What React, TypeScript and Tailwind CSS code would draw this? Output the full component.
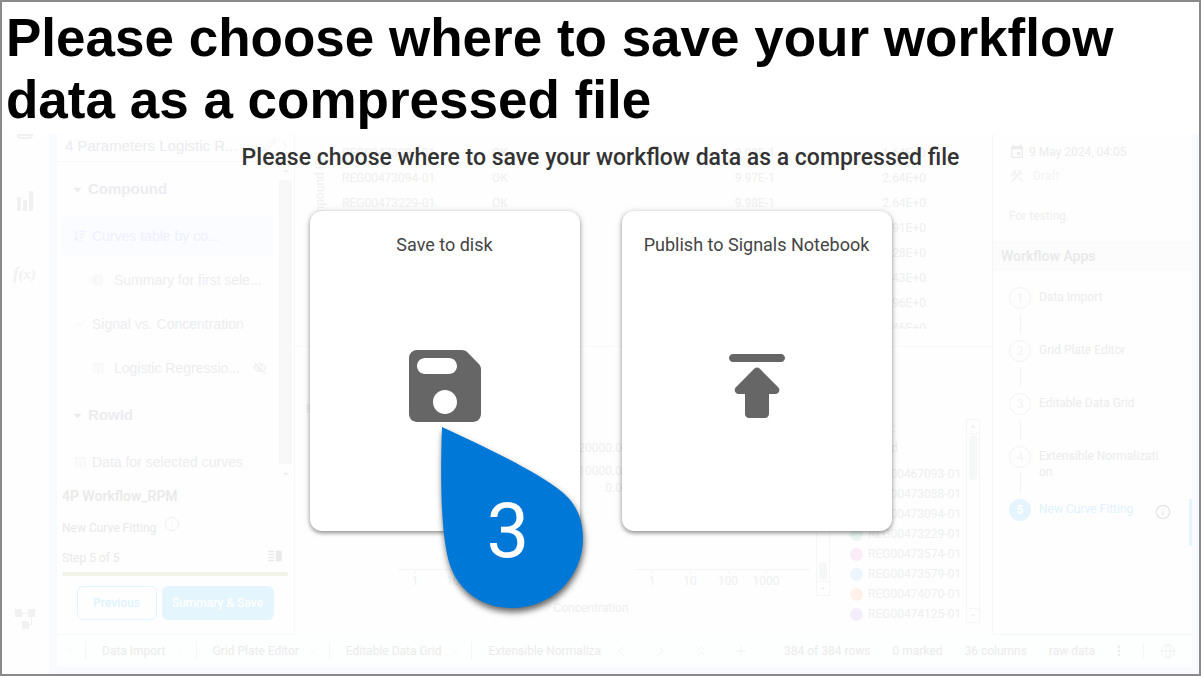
import {
  ChevronLeft,
  ChevronRight,
  ChevronsUp,
  Globe,
  Info,
  Pencil,
  Plus,
  X,
} from 'lucide-react';
import {
  MdArrowDropDown,
  MdArrowDropUp,
  MdConstruction,
  MdEvent,
  MdMoreVert,
  MdOutlineVisibilityOff,
  MdPieChart,
  MdShowChart,
  MdTableChart,
  MdVerticalSplit,
} from 'react-icons/md';
import { FaSortAmountDown } from 'react-icons/fa';
import type { ReactNode } from 'react';

const rows = [
  ['REG00473088-01', 'OK', '9.98E-1', '1.64E+0'],
  ['REG00473094-01', 'OK', '9.97E-1', '2.64E+0'],
  ['REG00473229-01', 'OK', '9.98E-1', '2.64E+0'],
  ['REG00473574-01', 'OK', '9.98E-1', '1.91E+0'],
  ['REG00473579-01', 'OK', '9.97E-1', '2.28E+0'],
  ['REG00474070-01', 'OK', '9.98E-1', '2.43E+0'],
  ['REG00474125-01', 'OK', '9.96E-1', '1.96E+0'],
  ['REG00474130-01', 'OK', '9.98E-1', '2.46E+0'],
];

const legend = [
  { id: 'REG00467093-01', color: 'bg-[#edf6fd]' },
  { id: 'REG00473088-01', color: 'bg-[#fef1e9]' },
  { id: 'REG00473094-01', color: 'bg-[#f4ecfc]' },
  { id: 'REG00473229-01', color: 'bg-[#eaf8f1]' },
  { id: 'REG00473574-01', color: 'bg-[#faedf9]' },
  { id: 'REG00473579-01', color: 'bg-[#ecf5fc]' },
  { id: 'REG00474070-01', color: 'bg-[#fef1e9]' },
  { id: 'REG00474125-01', color: 'bg-[#f4edfb]' },
];

const steps = ['Data Import', 'Grid Plate Editor', 'Editable Data Grid', 'Extensible Normalization', 'New Curve Fitting'];

const tabs = ['Data Import', 'Grid Plate Editor', 'Editable Data Grid'];

function Rail() {
  return (
    <nav className="flex w-[47px] shrink-0 flex-col items-center pr-0.5 text-[#f1f1f1]">
      <div className="h-[5px] w-4 rounded-b-sm border-2 border-current" />
      <svg viewBox="0 0 16 20" className="mt-[52px] h-5 w-4" fill="currentColor">
        <path d="M0 6h4v14H0zM6 9h4v11H6zM12 0h4v20h-4z" />
      </svg>
      <span className="mt-[51px] font-['Liberation_Serif',serif] text-[17px] leading-6 font-bold italic">
        f<span className="text-[15px]">(x)</span>
      </span>
      <svg viewBox="0 0 20 20" className="mt-auto mb-[45px] h-5 w-5" fill="currentColor">
        <path d="M0 0h7v8H0zM13 0h7v8h-7zM7 12h7v8H7zM7 4h6v1H7zM14 15h2V8h1v8h-3z" />
      </svg>
    </nav>
  );
}

interface TreeItemProps {
  icon: ReactNode;
  label: string;
  nested?: boolean;
  active?: boolean;
  hidden?: boolean;
}

function TreeItem({ icon, label, nested, active, hidden }: TreeItemProps) {
  return (
    <div
      className={`my-0.5 flex h-10 items-center rounded pr-1.5 ${nested ? 'gap-2 pl-[29px]' : 'gap-1 pl-[11px]'} ${
        active ? 'bg-[#fbfcff] text-[#eeefff]' : 'text-[#ededf0]'
      }`}
    >
      <span className={`flex w-4 shrink-0 justify-center text-sm ${active ? '' : 'text-[#f8f8f8]'}`}>{icon}</span>
      <span className="whitespace-nowrap">{label}</span>
      {hidden && <MdOutlineVisibilityOff className="ml-auto shrink-0 text-sm" />}
    </div>
  );
}

function TreeGroup({ label }: { label: string }) {
  return (
    <div className="flex h-[50px] items-center pl-1.5 text-[15px] font-bold text-[#ececf0]">
      <MdArrowDropDown className="text-[21px]" />
      <span>{label}</span>
    </div>
  );
}

function AnalysisPanel() {
  return (
    <aside className="flex w-[238px] shrink-0 flex-col border-r border-b border-[#f7f7fa] font-['Liberation_Sans',sans-serif] text-[14px]">
      <div className="flex h-7 items-start border-b border-[#f7f7f9] pl-2 text-[15px] leading-6 text-[#ebebee]">
        <span className="w-[190px] shrink-0">4 Parameters Logistic R...</span>
        <Pencil className="mt-1 ml-2 h-3.5 w-3.5 shrink-0" strokeWidth={1} />
        <ChevronRight className="mt-1 h-4 w-4 shrink-0" strokeWidth={1} />
      </div>
      <div className="flex">
        <div className="flex min-w-0 flex-1 flex-col pt-0.5 pl-1">
          <TreeGroup label="Compound" />
          <TreeItem icon={<FaSortAmountDown className="text-xs" />} label="Curves table by co..." active />
          <TreeItem icon={<MdPieChart />} label="Summary for first sele..." nested />
          <TreeItem icon={<MdShowChart />} label="Signal vs. Concentration" />
          <TreeItem icon={<MdTableChart />} label="Logistic Regressio..." nested hidden />
          <TreeGroup label="RowId" />
          <TreeItem icon={<MdTableChart />} label="Data for selected curves" />
        </div>
        <div className="mr-0.5 ml-1.5 flex w-[13px] flex-col items-center text-[#efefef]">
          <MdArrowDropUp className="h-[18px] w-4" />
          <div className="h-[284px] w-full bg-[#f8f8f8]" />
          <MdArrowDropDown className="h-5 w-4" />
        </div>
      </div>
      <div className="flex flex-1 flex-col pr-1.5 pl-[5px] font-[Roboto,sans-serif] text-[12px] text-[#e9e9e9]">
        <p className="text-[14px] leading-6 font-medium">4P Workflow_RPM</p>
        <p className="mt-2 flex items-center gap-2 leading-6">
          New Curve Fitting <Info className="mb-2 h-4 w-4" strokeWidth={1} />
        </p>
        <p className="mt-2 flex h-5 items-center justify-between pr-1">
          Step 5 of 5 <MdVerticalSplit className="mb-1 text-lg" />
        </p>
        <div className="mt-1 h-1 rounded-full bg-[#eff4e6]" />
        <div className="mt-2.5 flex justify-center gap-[5px] font-medium">
          <button className="h-[34px] w-20 rounded-md border border-[#e3f4fe] text-[#e0f2fd]">Previous</button>
          <button className="h-[34px] w-28 rounded-md bg-[#e5f5fd] text-white">Summary &amp; Save</button>
        </div>
      </div>
    </aside>
  );
}

function Axis({ x }: { x: number }) {
  return (
    <g>
      <path d={`M${x - 17} 222.5h175`} stroke="#f5f5f5" />
      {['1', '10', '100', '1000'].map((t, i) => (
        <g key={t}>
          <path d={`M${x + i * 38}.5 222v4`} stroke="#f5f5f5" />
          <text x={x + i * 38} y={238} textAnchor="middle">
            {t}
          </text>
        </g>
      ))}
    </g>
  );
}

function Charts() {
  return (
    <svg viewBox="0 0 521 288" className="h-72 w-[521px] shrink-0 text-[12px]" fill="#efefef">
      <text x="11" y="66">R</text>
      <text x="327" y="105" textAnchor="end">20000.0</text>
      <text x="327" y="128" textAnchor="end">10000.0</text>
      <text x="327" y="145" textAnchor="end">0.0</text>
      <Axis x={120} />
      <Axis x={357} />
      <text x="296" y="265" textAnchor="middle">Concentration</text>
    </svg>
  );
}

function Visuals() {
  return (
    <section className="flex min-w-0 flex-1 flex-col text-[12px] text-[#efefef]">
      <div className="flex h-[213px] shrink-0 border-b border-[#f9f9f9]">
        <div className="w-[47px] shrink-0 pt-6">
          <span className="ml-4 block rotate-180 leading-[18px] [writing-mode:vertical-rl]">Compound ID</span>
        </div>
        <div className="h-[195px] overflow-hidden pt-1.5">
          <table className="table-fixed">
            <tbody>
              {rows.map(([id, status, fit, slope], i) => (
                <tr key={i} className="h-[25px]">
                  <td className="w-[150px]">{id}</td>
                  <td className="w-[133px]">{status}</td>
                  <td className="w-[150px] text-right">{fit}</td>
                  <td className="w-[151px] text-right">{slope}</td>
                </tr>
              ))}
            </tbody>
          </table>
        </div>
      </div>
      <div className="flex">
        <Charts />
        <div className="mt-[72px] flex h-[177px] w-3.5 shrink-0 flex-col items-center justify-end border border-[#f6f6f6]">
          <div className="mb-px h-[18px] w-2 rounded-full bg-[#f6f8f7]" />
          <MdArrowDropDown className="h-3.5 w-full border-t border-[#f6f6f6]" />
        </div>
        <div className="ml-5 w-[116px] pt-[71px]">
          <p className="w-[46px] text-right leading-5">Color:</p>
          <p className="w-12 text-right leading-5">Id</p>
          <ul className="mt-1.5">
            {legend.map(({ id, color }) => (
              <li key={id} className="flex h-5 items-center gap-[5px]">
                <span className={`h-[13px] w-[13px] rounded-full ${color}`} />
                {id}
              </li>
            ))}
          </ul>
        </div>
        <div className="mt-[72px] flex h-[204px] w-3.5 shrink-0 flex-col items-center border border-[#f6f6f6]">
          <MdArrowDropUp className="h-3.5 w-full border-b border-[#f6f6f6]" />
          <div className="mt-px h-[45px] w-2 rounded-full bg-[#f6f8f7]" />
          <MdArrowDropDown className="mt-auto h-3.5 w-full border-t border-[#f6f6f6]" />
        </div>
      </div>
    </section>
  );
}

function WorkflowPanel() {
  return (
    <aside className="w-[200px] shrink-0 border-b border-l border-[#f6f6f6] text-[12px] text-[#ececec]">
      <p className="mt-1.5 ml-4 flex h-6 items-center gap-1">
        <MdEvent className="text-base" /> 9 May 2024, 04:05
      </p>
      <p className="ml-4 flex h-6 items-center gap-2 text-[#f3f3f3]">
        <MdConstruction className="text-base" /> Draft
      </p>
      <p className="mt-4 ml-4 leading-6 text-[#efefef]">For testing.</p>
      <h2 className="mt-[13px] bg-[#fcfcfc] pl-2 text-[14px] leading-[30px] font-medium text-[#e9e9e9]">Workflow Apps</h2>
      <ol className="mt-4">
        {steps.map((step, i) => {
          const current = i === steps.length - 1;
          return (
            <li key={step} className="flex h-[53px]">
              <div className="ml-4 flex flex-col items-center">
                <span
                  className={`flex h-[22px] w-[22px] items-center justify-center rounded-full border ${
                    current ? 'border-[#e5f5fd] bg-[#e5f5fd] font-bold text-white' : 'border-[#f3f3f3] text-[#f3f3f3]'
                  }`}
                >
                  {i + 1}
                </span>
                {!current && <span className="mt-[5px] h-5 w-px bg-[#f3f3f3]" />}
              </div>
              <span className={`mt-0.5 ml-2 w-[122px] leading-4 break-all ${current ? 'text-[#dff2fd]' : ''}`}>{step}</span>
              {current && (
                <>
                  <Info className="-ml-1.5 mt-[5px] h-4 w-4 text-[#e5e5e5]" strokeWidth={2} />
                  <span className="ml-auto h-[47px] w-[3px] bg-[#e5f5fd]" />
                </>
              )}
            </li>
          );
        })}
      </ol>
    </aside>
  );
}

function StatusBar() {
  return (
    <footer className="flex h-8 shrink-0 items-center bg-[#fdfefe] text-[12px] whitespace-nowrap text-[#ebebeb]">
      <X className="ml-1.5 h-3 w-3 shrink-0 text-[#f4f4f4]" strokeWidth={1} />
      {tabs.map((tab) => (
        <div key={tab} className="ml-2.5 flex items-center border-l border-[#f5f5f5]">
          <button className="pl-4">{tab}</button>
          <X className="ml-2 h-3 w-3 shrink-0 text-[#f4f4f4]" strokeWidth={1} />
        </div>
      ))}
      <button className="ml-2.5 border-l border-[#f5f5f5] pl-4">Extensible Normaliza</button>
      <div className="ml-3 flex gap-6">
        <ChevronLeft className="h-4 w-4" strokeWidth={1} />
        <ChevronRight className="h-4 w-4" strokeWidth={1} />
        <ChevronsUp className="h-4 w-4" strokeWidth={1} />
        <Plus className="h-4 w-4" strokeWidth={1} />
      </div>
      <div className="ml-auto flex items-center gap-[22px]">
        <span>384 of 384 rows</span>
        <span>0 marked</span>
        <span>36 columns</span>
        <span>raw data</span>
      </div>
      <MdMoreVert className="ml-4 text-base" />
      <span className="ml-4 h-4 w-px bg-[#f5f5f5]" />
      <Globe className="mr-4 ml-4 h-4 w-4" strokeWidth={1} />
    </footer>
  );
}

function StepMarker() {
  return (
    <div className="pointer-events-none absolute top-[206px] left-[121px]">
      <svg width="163" height="203" viewBox="0 0 163 203" className="drop-shadow-[1px_4px_3px_rgba(0,0,0,0.6)]">
        <path
          d="M11 10C61 33 103 54 126 71C143 83 152 99 152 121C152 160 121 191 81 191C53 191 30 176 20 151C10 124 9 68 11 10Z"
          fill="#0078d7"
        />
      </svg>
      <span className="absolute top-[72px] left-14 text-[76px] leading-[84px] text-white">3</span>
    </div>
  );
}

interface SaveCardProps {
  label: string;
  path: string;
  children?: ReactNode;
}

function SaveCard({ label, path, children }: SaveCardProps) {
  return (
    <div className="relative">
      <button className="flex h-80 w-[270px] flex-col items-center rounded-xl bg-white pt-[22px] shadow-[0_2px_4px_rgba(0,0,0,0.4),0_0_8px_rgba(0,0,0,0.1)]">
        <span className="text-[18px] leading-6 text-[#444]">{label}</span>
        <svg viewBox="0 0 24 24" className="mt-[81px] h-24 w-24" fill="#666">
          <path d={path} />
        </svg>
      </button>
      {children}
    </div>
  );
}

function SaveDialog() {
  return (
    <div role="dialog" aria-labelledby="save-title" className="absolute inset-0 flex flex-col items-center gap-[38px] pt-[9px]">
      <h2 id="save-title" className="text-[23px] leading-[30px] font-medium text-[#333]">
        Please choose where to save your workflow data as a compressed file
      </h2>
      <div className="flex gap-[42px]">
        <SaveCard
          label="Save to disk"
          path="M17.59 3.59c-.38-.38-.89-.59-1.42-.59H5a2 2 0 0 0-2 2v14c0 1.1.9 2 2 2h14c1.1 0 2-.9 2-2V7.83c0-.53-.21-1.04-.59-1.41l-2.82-2.83zM12 19c-1.66 0-3-1.34-3-3s1.34-3 3-3 3 1.34 3 3-1.34 3-3 3zm1-10H7c-1.1 0-2-.9-2-2s.9-2 2-2h6c1.1 0 2 .9 2 2s-.9 2-2 2z"
        >
          <StepMarker />
        </SaveCard>
        <SaveCard
          label="Publish to Signals Notebook"
          path="M5 5c0 .55.45 1 1 1h12c.55 0 1-.45 1-1s-.45-1-1-1H6c-.55 0-1 .45-1 1zm2.41 9H9v5c0 .55.45 1 1 1h4c.55 0 1-.45 1-1v-5h1.59c.89 0 1.34-1.08.71-1.71L12.71 7.7a.9959.9959 0 0 0-1.41 0l-4.59 4.59c-.63.63-.19 1.71.7 1.71z"
        />
      </div>
    </div>
  );
}

export default function App() {
  return (
    <div className="flex min-h-screen flex-col border-2 border-[#8a8a8a] bg-white font-[Roboto,sans-serif]">
      <h1 className="px-1 pt-[5px] pb-[3px] font-['Liberation_Sans',sans-serif] text-[53px] leading-[62px] font-bold text-black">
        Please choose where to save your workflow data as a compressed file
      </h1>
      <main className="relative flex flex-1 bg-[#fefefe]">
        <Rail />
        <div className="flex min-w-0 flex-1 flex-col bg-[#f9faff] pr-[7px] pb-[7px] pl-2">
          <div className="flex flex-1 bg-[#fefefe]">
            <AnalysisPanel />
            <Visuals />
            <WorkflowPanel />
          </div>
          <StatusBar />
        </div>
        <SaveDialog />
      </main>
    </div>
  );
}
